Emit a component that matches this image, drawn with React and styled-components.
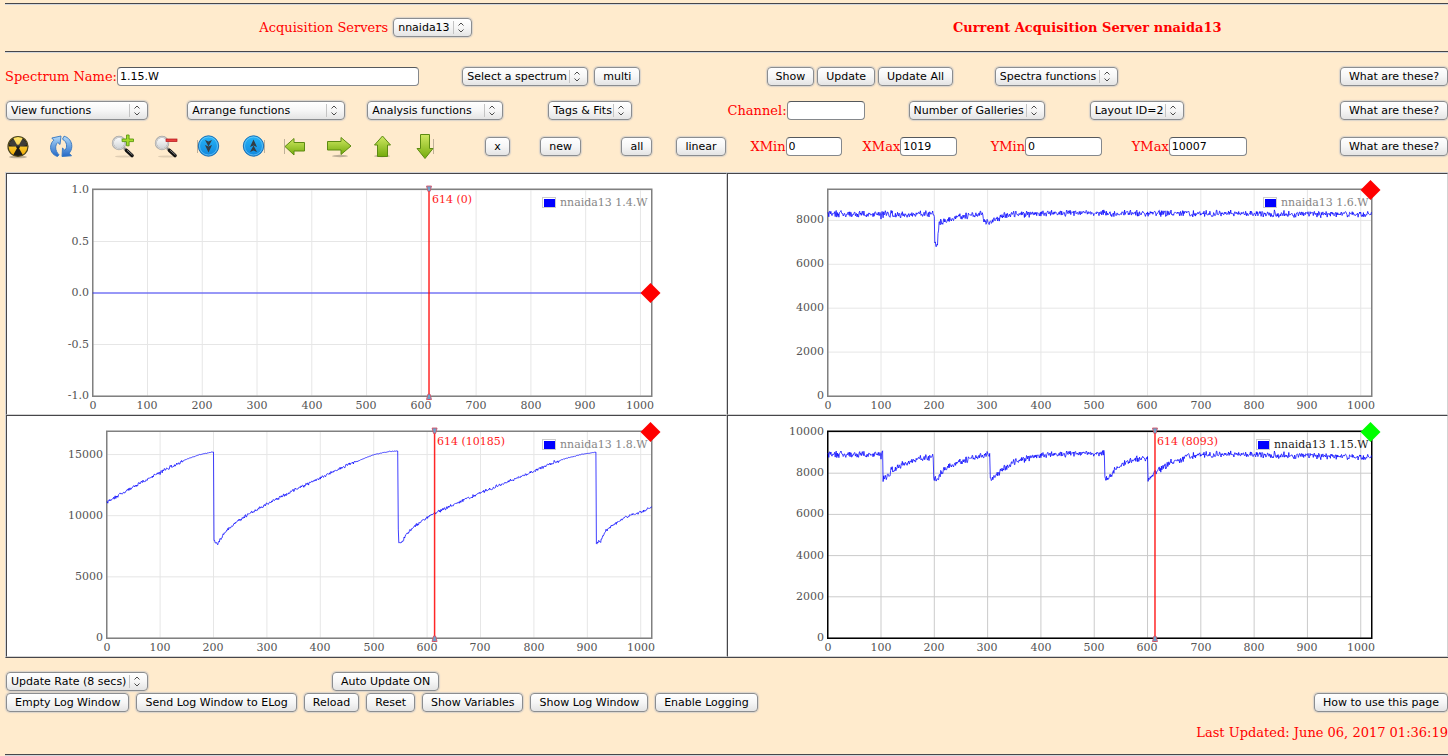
import React from 'react';
import styled, { createGlobalStyle } from 'styled-components';

const GlobalStyle = createGlobalStyle`
  * {
    box-sizing: border-box;
  }

  body {
    margin: 0;
    background: #ffebcd;
    color: #ff0000;
    font-family: 'DejaVu Serif', serif;
    font-size: 13px;
    line-height: 16px;
    overflow-x: hidden;
  }
`;

const Page = styled.main`
  padding: 3px 0 0 5px;
`;

const Rule = styled.hr`
  height: 2px;
  margin: 0;
  border: 0;
  border-top: 1px solid #46464a;
  border-bottom: 1px solid #d3d7dc;
`;

const Header = styled.header`
  display: grid;
  grid-template-columns: 1fr 1fr;
  align-items: center;
  justify-items: center;
  padding: 13px 0 14px;
`;

const Toolbar = styled.div`
  display: grid;
  grid-template-columns: ${p => p.$columns};
  align-items: center;
  margin-top: ${p => p.$top}px;
  white-space: nowrap;
`;

const Group = styled.div`
  display: flex;
  align-items: center;
  gap: ${p => p.$gap || 0}px;
`;

const Current = styled.h1`
  margin: 0;
  font-size: 13px;
  line-height: 16px;
`;

const Button = styled.button`
  height: 19px;
  padding: 0 8px;
  border: 1px solid #8b8d90;
  border-radius: 4px;
  background: linear-gradient(#ffffff, #f6f6f6 50%, #e4e4e4);
  box-shadow: 0 0 1px 1px rgba(150, 170, 200, 0.35);
  color: #000000;
  font-family: 'DejaVu Sans', sans-serif;
  font-size: 11px;
  line-height: 16px;
  white-space: nowrap;
`;

const SelectBox = styled.span`
  position: relative;
  display: inline-block;
  width: ${p => p.$width}px;
  height: 19px;
  margin-left: 1px;

  select {
    display: block;
    appearance: none;
    width: 100%;
    height: 19px;
    padding: 0 0 0 4px;
    border: 1px solid #8b8d90;
    border-radius: 4px;
    background: linear-gradient(#ffffff, #f6f6f6 50%, #e4e4e4);
    box-shadow: 0 0 1px 1px rgba(150, 170, 200, 0.35);
    color: #000000;
    font-family: 'DejaVu Sans', sans-serif;
    font-size: 11px;
  }

  svg {
    position: absolute;
    top: 2px;
    right: 4px;
    pointer-events: none;
  }
`;

const Field = styled.label`
  display: flex;
  align-items: center;
`;

const TextBox = styled.input`
  width: ${p => p.$width}px;
  height: 19px;
  padding: 0 2px;
  border: 1px solid #85888c;
  border-top-color: #55585c;
  border-radius: 4px;
  background: #ffffff;
  color: #000000;
  font-family: 'DejaVu Sans', sans-serif;
  font-size: 11px;
`;

const IconButton = styled.button`
  width: 25px;
  height: 25px;
  padding: 0;
  border: 0;
  background: none;

  svg {
    display: block;
  }
`;

const Galleries = styled.section`
  display: grid;
  grid-template-columns: 1fr 1fr;
  margin-top: 13px;
  border: 1px solid #d3d3d3;
  border-right: 0;
  border-bottom-color: #46464a;
`;

const Cell = styled.div`
  display: flex;
  justify-content: center;
  border: 1px solid #d3d3d3;
  border-top-color: #46464a;
  border-left-color: #46464a;
  background: #ffffff;
`;

const Plot = styled.svg`
  display: block;
  width: 601px;
  height: 240px;
  font-family: 'DejaVu Serif', serif;
  font-size: 11px;
`;

const Footer = styled.footer`
  display: flex;
  align-items: center;
  justify-content: space-between;
  margin-top: 2px;
  padding-left: 1px;
`;

const Updated = styled.p`
  margin: 13px 0;
  text-align: right;
`;

const Select = ({ label, width, options }) => (
  <SelectBox $width={width}>
    <select aria-label={label}>
      {(options || [label]).map(o => (
        <option key={o}>{o}</option>
      ))}
    </select>
    <svg width="15" height="15" viewBox="0 0 15 15" fill="none">
      <path d="M0.5 1v13" stroke="#c4c4c4" />
      <path d="M5.500 5.500l2.500-2.500l2.500 2.500M5.500 9.500l2.500 2.500l2.500-2.500" stroke="#4c4c4c" />
    </svg>
  </SelectBox>
);

const Input = ({ label, width, value }) => (
  <Field>
    {label}
    <TextBox type="text" $width={width} defaultValue={value} />
  </Field>
);

// black blades of the radiation sign, 60 degrees each
const blade = from => {
  const at = deg => {
    const a = (deg * Math.PI) / 180;
    return `${(13 + 9.4 * Math.cos(a)).toFixed(2)} ${(12.5 + 9.4 * Math.sin(a)).toFixed(2)}`;
  };
  return `M13 12.5L${at(from)}A9.4 9.4 0 0 1 ${at(from + 60)}Z`;
};

const Svg = ({ children }) => (
  <svg width="25" height="25" viewBox="0 0 25 25" fill="none">
    {children}
  </svg>
);

const Radiation = () => (
  <Svg>
    <ellipse cx="13" cy="23" rx="9" ry="1.3" fill="#000" opacity="0.25" />
    <circle cx="13" cy="12.5" r="10" fill="url(#yellow)" stroke="#4a431c" strokeWidth="1.2" />
    {[0, 120, 240].map(a => (
      <path key={a} d={blade(a + 60)} fill="#1d1c17" />
    ))}
    <circle cx="13" cy="12.5" r="2" fill="#1d1c17" />
    <path d="M4 11a9.2 9.2 0 0 1 18 0q-9 3-18 0z" fill="#fff" opacity="0.15" />
  </Svg>
);

const Refresh = () => (
  <Svg>
    <g stroke="#3274c0" strokeWidth="0.9" strokeLinejoin="round">
      <path
        d="M8.500 22.500C3.500 21 1 16.500 1.700 12C2.100 9.500 3.200 7.500 4.800 6.200L2.800 4L12 2L11 10.500L8.800 8.500C6 10.800 5.600 16.500 10 20.800Z"
        fill="url(#blue)"
      />
      <path
        d="M15 2.200C19.500 3.200 23 7.500 22.800 12.500C22.700 15.200 21.700 17.500 20.200 19.200L22.500 21.800L13 22.500L13.500 14L15.900 16.300C18.800 13.200 18 7.500 13.500 5.200Z"
        fill="url(#blue)"
      />
    </g>
  </Svg>
);

const Magnifier = ({ children }) => (
  <Svg>
    <ellipse cx="13" cy="22.500" rx="9" ry="1" fill="#000" opacity="0.12" />
    <path d="M13 14L16 17" stroke="#8d8d8d" strokeWidth="2.500" />
    <path d="M15.500 16.500L21 21.500" stroke="#111" strokeWidth="3.600" strokeLinecap="round" />
    <path d="M16 16.200L21.500 21" stroke="#999" strokeWidth="0.8" />
    <circle cx="8" cy="9" r="6.200" fill="url(#glass)" stroke="#a5a5a5" strokeWidth="2" />
    <circle cx="8" cy="9" r="6" stroke="#e6e6e6" strokeWidth="0.8" />
    {children}
  </Svg>
);

const ZoomIn = () => (
  <Magnifier>
    <path
      d="M15.500 1h2.600v4h4.400v2.600h-4.400v4.200h-2.600v-4.200h-4.400v-2.600h4.400z"
      fill="#a5dc2c"
      stroke="#5b9a10"
      strokeWidth="0.9"
    />
  </Magnifier>
);

const ZoomOut = () => (
  <Magnifier>
    <rect x="12" y="5" width="11" height="2.600" fill="#e8403c" stroke="#b3141c" strokeWidth="0.7" />
  </Magnifier>
);

const Disc = ({ up }) => (
  <Svg>
    <path d={up ? 'M23.500 6v13' : 'M1.500 6v13'} stroke="#000" opacity="0.25" />
    <circle cx="12.500" cy="12" r="10.200" fill="url(#sky)" stroke="#1b6fb4" />
    <circle cx="12.500" cy="12" r="9" stroke="#7fd0fb" strokeWidth="0.8" opacity="0.8" />
    <g transform={up ? 'rotate(180 12.500 12)' : undefined}>
      <path d="M9 6l3.500 1.500l3.500-1.500l-3.500 6.500z" fill="#333c44" />
      <path d="M9 11l3.500 1.500l3.500-1.500l-3.500 7.500z" fill="#333c44" />
    </g>
  </Svg>
);

const Arrow = ({ d, shadow }) => (
  <Svg>
    {shadow}
    <path d={d} fill="url(#green)" stroke="#5c8a12" strokeWidth="1" strokeLinejoin="round" />
  </Svg>
);

const edge = d => <path d={d} stroke="#000" opacity="0.25" />;
const floor = cx => <ellipse cx={cx} cy="22" rx="8" ry="1.200" fill="#000" opacity="0.25" />;

const gradients = [
  ['yellow', '#ffe45c', '#f0a800'],
  ['blue', '#b4dcfa', '#2468c6'],
  ['glass', '#ffffff', '#cfd2d4'],
  ['sky', '#25b4f7', '#1287dd'],
  ['green', '#cfe862', '#74ab0c'],
];

const Gradients = () => (
  <svg width="0" height="0" display="block">
    <defs>
      {gradients.map(([id, from, to]) => (
        <linearGradient key={id} id={id} x1="0" y1="0" x2="0" y2="1">
          <stop offset="0" stopColor={from} />
          <stop offset="1" stopColor={to} />
        </linearGradient>
      ))}
    </defs>
  </svg>
);

const icons = [
  ['Clear', <Radiation />],
  ['Refresh', <Refresh />],
  ['Zoom in', <ZoomIn />],
  ['Zoom out', <ZoomOut />],
  ['Compress', <Disc />],
  ['Expand', <Disc up />],
  ['Left', <Arrow d="M2 12.500L11 4.500V8.500H21.500V17H11V21z" shadow={edge('M1.500 5v15')} />],
  ['Right', <Arrow d="M24 12L14 3.500V7.500H0.500V16H14V20.500z" shadow={floor(13)} />],
  ['Up', <Arrow d="M12.500 2L20.500 11H17.500V22.500H7.500V11H4.500z" shadow={floor(12)} />],
  ['Down', <Arrow d="M12 24.500L4 14.500H7.500V0.500H16.500V14.500H20z" shadow={edge('M20.500 5v15')} />],
];

const X_TICKS = [0, 100, 200, 300, 400, 500, 600, 700, 800, 900, 1000];

const spectra = [
  {
    name: 'nnaida13 1.4.W',
    left: 27,
    right: 586,
    zero: 119,
    perUnit: 103,
    ticks: [1, 0.5, 0, -0.5, -1],
    digits: 1,
    noise: 0,
    cursor: '614 (0)',
    legendX: 494,
    diamond: [584.5, 119],
    points: [[0, 0], [1020, 0]],
  },
  {
    name: 'nnaida13 1.6.W',
    left: 41,
    right: 585,
    zero: 222,
    perUnit: 0.02195,
    ticks: [0, 2000, 4000, 6000, 8000],
    noise: 180,
    legendX: 494,
    diamond: [583.5, 16],
    points: [
      [0, 8290], [200, 8280], [201, 6930], [206, 6900], [207, 7500], [209, 7890], [225, 7990],
      [240, 8160], [275, 8250], [291, 8330], [293, 8050], [296, 7910], [305, 7930], [320, 8090],
      [335, 8280], [460, 8330], [1020, 8280],
    ],
  },
  {
    name: 'nnaida13 1.8.W',
    left: 41,
    right: 586,
    zero: 222,
    perUnit: 0.01223,
    ticks: [0, 5000, 10000, 15000],
    noise: 150,
    calmAbove: 14500,
    cursor: '614 (10185)',
    legendX: 494,
    diamond: [584.5, 16],
    points: [
      [0, 11080], [50, 12370], [100, 13550], [150, 14640], [175, 15000], [200, 15220], [201, 7930],
      [208, 7730], [222, 8670], [240, 9400], [262, 10030], [300, 10960], [350, 12080], [400, 13080],
      [450, 14120], [500, 14990], [530, 15260], [545, 15300], [546, 8940], [547, 7850], [553, 7790],
      [560, 8390], [575, 9080], [600, 9870], [614, 10185], [650, 10900], [700, 11880], [750, 12730],
      [800, 13630], [830, 14250], [860, 14690], [890, 15020], [916, 15190], [917, 7770], [925, 7950],
      [935, 8800], [950, 9290], [975, 9950], [1000, 10300], [1020, 10680],
    ],
  },
  {
    name: 'nnaida13 1.15.W',
    active: true,
    left: 41,
    right: 585,
    zero: 222,
    perUnit: 0.0206,
    ticks: [0, 2000, 4000, 6000, 8000, 10000],
    noise: 190,
    cursor: '614 (8093)',
    legendX: 487,
    diamond: [583.5, 16],
    points: [
      [0, 8900], [102, 8920], [103, 9080], [104, 7770], [109, 7720], [120, 8140], [140, 8460],
      [160, 8625], [175, 8700], [198, 8770], [199, 7770], [205, 7720], [215, 8090], [230, 8380],
      [250, 8576], [275, 8770], [304, 8940], [305, 7720], [312, 7770], [320, 8010], [335, 8330],
      [350, 8544], [375, 8740], [400, 8867], [460, 8940], [519, 8950], [520, 7740], [527, 7770],
      [540, 8270], [560, 8495], [580, 8690], [600, 8740], [601, 7740], [606, 7740], [614, 8040],
      [630, 8270], [645, 8540], [665, 8630], [675, 8830], [700, 8900], [800, 8900], [900, 8850],
      [1020, 8770],
    ],
  },
];

// one sample per channel between the key points, with repeatable counting noise
const samples = ({ points, noise, calmAbove }) => {
  if (!noise) return points;
  let seed = 4711;
  const random = () => {
    seed = (seed * 16807) % 2147483647;
    return seed / 2147483647;
  };
  const result = [];
  let k = 0;
  for (let ch = 0; ch <= 1020; ch += 1) {
    while (k < points.length - 2 && points[k + 1][0] <= ch) k += 1;
    const [x0, y0] = points[k];
    const [x1, y1] = points[k + 1];
    const y = y0 + ((y1 - y0) * (ch - x0)) / (x1 - x0);
    const level = calmAbove && y > calmAbove ? noise / 5 : noise;
    const spike = random() > 0.98 ? 1.6 : 1;
    result.push([ch, y + (random() + random() - 1) * level * spike]);
  }
  return result;
};

const Spectrum = ({ spectrum }) => {
  const { left, right, zero, perUnit, ticks, digits, active, legendX } = spectrum;
  const x = ch => left - 0.3 + (ch * (right - left - 0.3)) / 1020;
  const y = v => zero - v * perUnit;
  const grid = active ? '#cbcbcb' : '#e6e6e6';
  const line = samples(spectrum)
    .map(([ch, v]) => `${x(ch).toFixed(1)},${y(v).toFixed(1)}`)
    .join(' ');
  const cursor = x(614);
  const [dx, dy] = spectrum.diamond;

  return (
    <Plot role="img" aria-label={spectrum.name}>
      {X_TICKS.map(t => (
        <path key={t} d={`M${x(t)} 16V222`} stroke={grid} />
      ))}
      {ticks.map(t => (
        <path key={t} d={`M${left} ${y(t)}H${right}`} stroke={grid} />
      ))}
      <rect
        x={left - 0.25}
        y="15.25"
        width={right - left}
        height="207"
        fill="none"
        stroke={active ? '#000000' : '#808080'}
        strokeWidth="1.5"
      />
      <polyline points={line} fill="none" stroke="#0000ff" strokeOpacity="0.75" />
      <g fill="#545454" textAnchor="middle">
        {X_TICKS.map(t => (
          <text key={t} x={Math.floor(x(t) + 0.3)} y="235">
            {t}
          </text>
        ))}
      </g>
      <g fill="#545454" textAnchor="end">
        {ticks.map(t => (
          <text key={t} x={left - 4} y={Math.round(y(t) + 3)}>
            {digits ? t.toFixed(digits) : t}
          </text>
        ))}
      </g>
      <rect x={legendX - 17.5} y="23.5" width="13" height="10" fill="#fff" stroke="#cccccc" />
      <rect x={legendX - 16} y="25" width="11" height="8" fill="#0000ff" />
      <text x={legendX} y="32" fill={active ? '#1a1a1a' : '#868686'}>
        {spectrum.name}
      </text>
      {spectrum.cursor && (
        <g>
          <path d={`M${cursor} 12V226`} stroke="#ff0000" strokeOpacity="0.85" strokeWidth="1.5" />
          <g fill="#6fa3cc" stroke="#d8475c" strokeWidth="0.8">
            <path d={`M${cursor - 2.5} 12h5l-1.500 5.500h-2z`} />
            <path d={`M${cursor - 2.5} 225.500h5l-1.500-5.500h-2z`} />
          </g>
          <text x={Math.floor(cursor) + 3} y="29" fill="#ff1a1a">
            {spectrum.cursor}
          </text>
        </g>
      )}
      <path
        d={`M${dx} ${dy - 10}l10 10l-10 10l-10-10z`}
        fill={active ? '#00ff00' : '#ff0000'}
      />
    </Plot>
  );
};

const App = () => (
  <Page>
    <GlobalStyle />
    <Gradients />
    <Rule />
    <Header>
      <Group $gap={4}>
        Acquisition Servers
        <Select label="Acquisition Servers" options={['nnaida13']} width={79} />
      </Group>
      <Current>Current Acquisition Server nnaida13</Current>
    </Header>
    <Rule />

    <Toolbar $top={14} $columns="456fr 305fr 227fr 346fr auto">
      <Input label="Spectrum Name:" width={302} value="1.15.W" />
      <Group $gap={6}>
        <Select label="Select a spectrum" width={126} />
        <Button>multi</Button>
      </Group>
      <Group $gap={3}>
        <Button>Show</Button>
        <Button>Update</Button>
        <Button>Update All</Button>
      </Group>
      <Select label="Spectra functions" width={123} />
      <Button>What are these?</Button>
    </Toolbar>

    <Toolbar $top={15} $columns="181fr 180fr 181fr 180fr 180fr 181fr 251fr auto">
      <Select label="View functions" width={142} />
      <Select label="Arrange functions" width={158} />
      <Select label="Analysis functions" width={136} />
      <Select label="Tags & Fits" width={84} />
      <Input label="Channel:" width={78} value="" />
      <Select label="Number of Galleries" width={136} />
      <Select label="Layout ID=2" width={94} />
      <Button>What are these?</Button>
    </Toolbar>

    <Toolbar
      $top={14}
      $columns="44fr 62fr 43fr 42fr 45fr 42fr 44fr 43fr 43fr 72fr 55fr 81fr 55fr 74fr 112fr 128fr 141fr 208fr auto"
    >
      {icons.map(([label, icon]) => (
        <IconButton key={label} aria-label={label}>
          {icon}
        </IconButton>
      ))}
      <Group><Button>x</Button></Group>
      <Group><Button>new</Button></Group>
      <Group><Button>all</Button></Group>
      <Group><Button>linear</Button></Group>
      <Input label="XMin" width={56} value="0" />
      <Input label="XMax" width={57} value="1019" />
      <Input label="YMin" width={77} value="0" />
      <Input label="YMax" width={78} value="10007" />
      <Button>What are these?</Button>
    </Toolbar>

    <Galleries>
      {spectra.map(s => (
        <Cell key={s.name}>
          <Spectrum spectrum={s} />
        </Cell>
      ))}
    </Galleries>

    <Toolbar $top={14} $columns="327fr 1116fr">
      <Select label="Update Rate (8 secs)" width={142} />
      <Group><Button>Auto Update ON</Button></Group>
    </Toolbar>
    <Footer>
      <Group $gap={7}>
        <Button>Empty Log Window</Button>
        <Button>Send Log Window to ELog</Button>
        <Button>Reload</Button>
        <Button>Reset</Button>
        <Button>Show Variables</Button>
        <Button>Show Log Window</Button>
        <Button>Enable Logging</Button>
      </Group>
      <Button>How to use this page</Button>
    </Footer>
    <Updated>Last Updated: June 06, 2017 01:36:19</Updated>
    <Rule />
  </Page>
);

export default App;
